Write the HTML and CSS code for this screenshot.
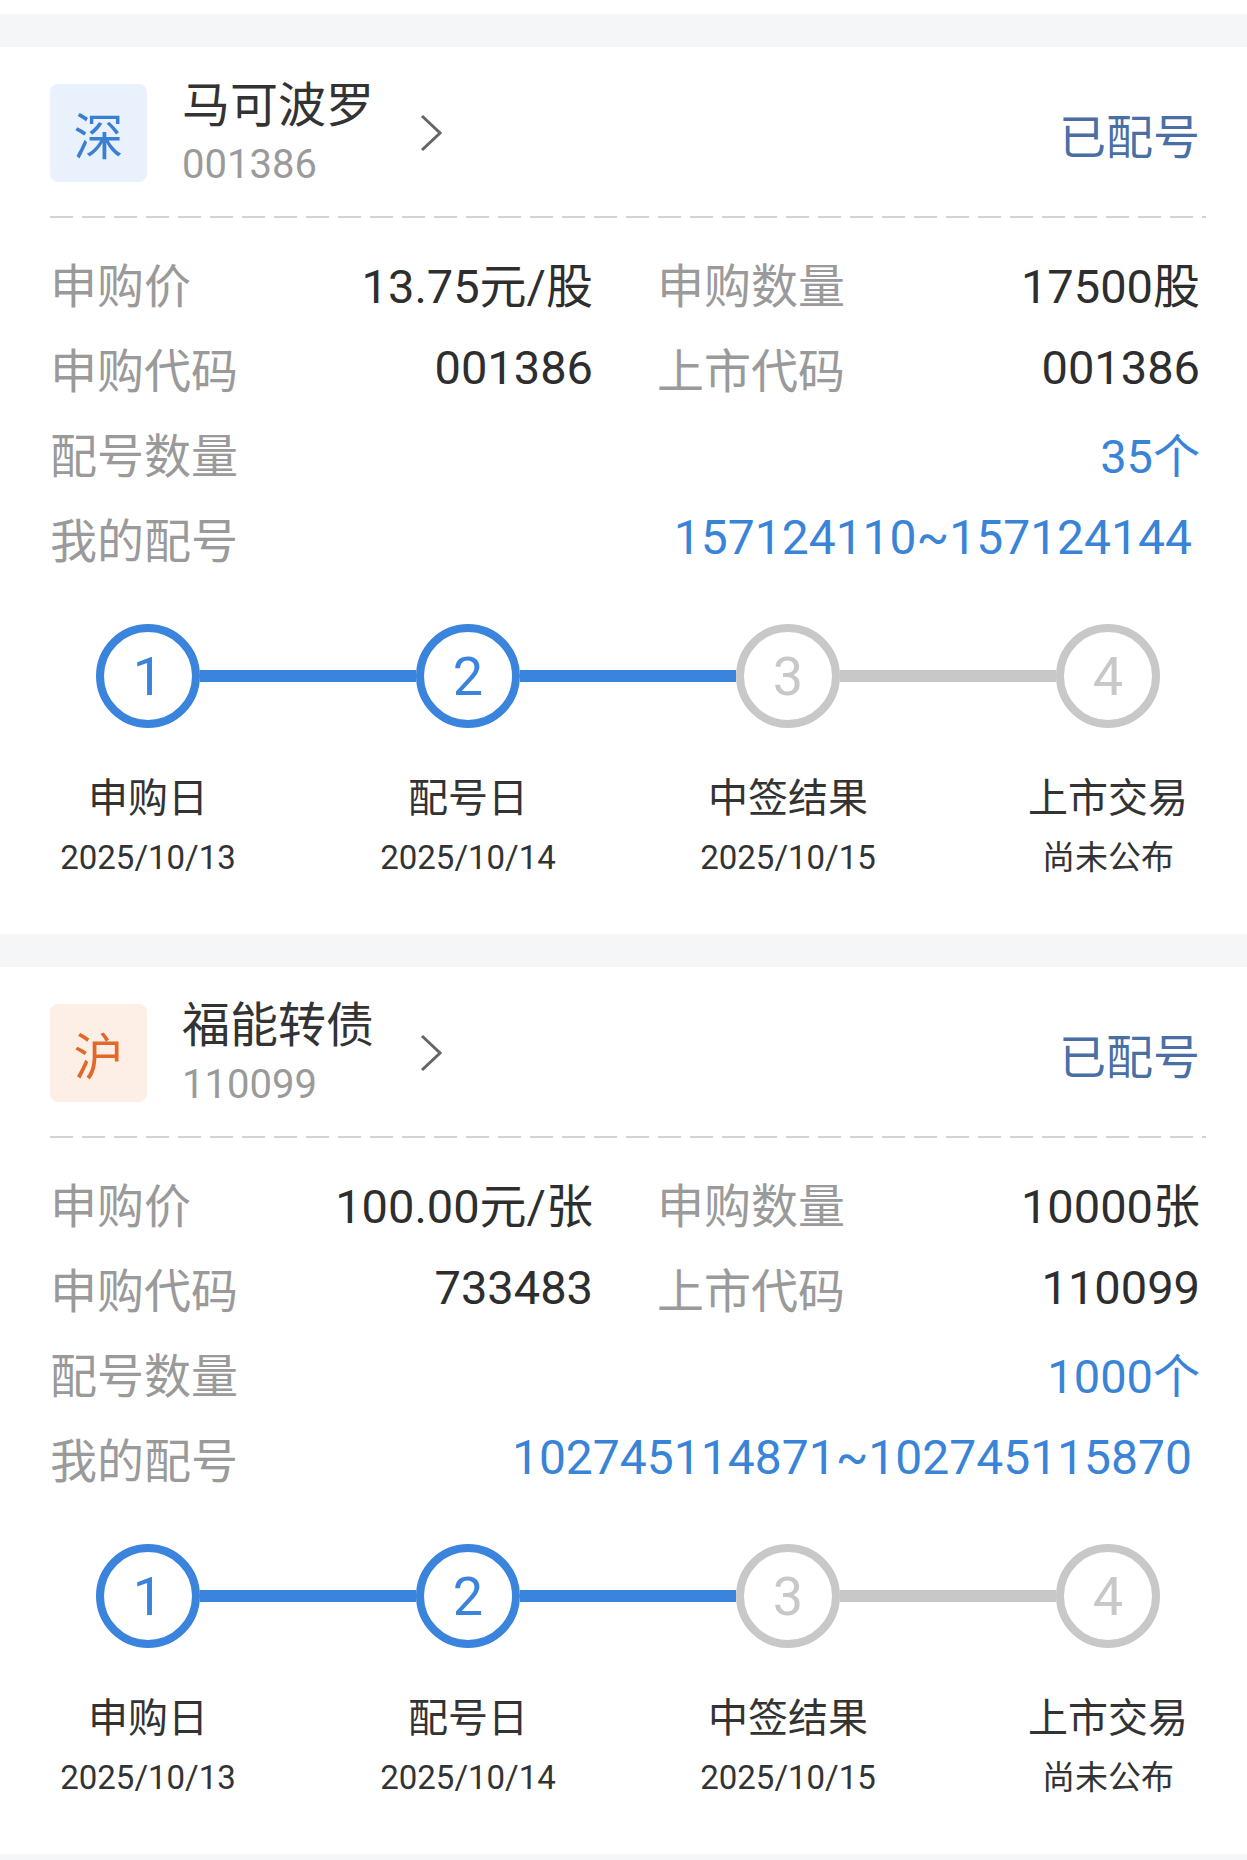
FILE: index.html
```html
<!DOCTYPE html>
<html lang="zh-CN">

<head>
    <meta charset="UTF-8">
    <meta name="viewport" content="width=device-width, initial-scale=1.0">
    <title>新股配号</title>
    <link rel="stylesheet" href="styles.css">
</head>

<body>
    <div class="top-strip"></div>

    <div class="list">
        <!-- 马可波罗 -->
        <div class="card">
            <div class="card-head">
                <div class="market market-sz">深</div>
                <div class="stock">
                    <div class="stock-name">马可波罗</div>
                    <div class="stock-code">001386</div>
                </div>
                <svg class="arrow" viewBox="0 0 22 38"><polyline points="2,2 20,19 2,36" /></svg>
                <div class="status">已配号</div>
            </div>
            <div class="dash"></div>

            <div class="info">
                <div class="info-grid">
                    <div class="pair"><span class="label">申购价</span><span class="value">13.75元/股</span></div>
                    <div class="pair"><span class="label">申购数量</span><span class="value">17500股</span></div>
                    <div class="pair"><span class="label">申购代码</span><span class="value">001386</span></div>
                    <div class="pair"><span class="label">上市代码</span><span class="value">001386</span></div>
                </div>
                <div class="pair"><span class="label">配号数量</span><span class="value blue">35个</span></div>
                <div class="pair"><span class="label">我的配号</span><span class="value blue range">157124110~157124144</span></div>
            </div>

            <div class="track">
                <div class="dot done">1</div>
                <div class="line done"></div>
                <div class="dot done">2</div>
                <div class="line done"></div>
                <div class="dot">3</div>
                <div class="line"></div>
                <div class="dot">4</div>
            </div>
            <div class="steps">
                <div class="step"><span class="step-name">申购日</span><span class="step-date">2025/10/13</span></div>
                <div class="step"><span class="step-name">配号日</span><span class="step-date">2025/10/14</span></div>
                <div class="step"><span class="step-name">中签结果</span><span class="step-date">2025/10/15</span></div>
                <div class="step"><span class="step-name">上市交易</span><span class="step-date">尚未公布</span></div>
            </div>
        </div>

        <!-- 福能转债 -->
        <div class="card">
            <div class="card-head">
                <div class="market market-sh">沪</div>
                <div class="stock">
                    <div class="stock-name">福能转债</div>
                    <div class="stock-code">110099</div>
                </div>
                <svg class="arrow" viewBox="0 0 22 38"><polyline points="2,2 20,19 2,36" /></svg>
                <div class="status">已配号</div>
            </div>
            <div class="dash"></div>

            <div class="info">
                <div class="info-grid">
                    <div class="pair"><span class="label">申购价</span><span class="value">100.00元/张</span></div>
                    <div class="pair"><span class="label">申购数量</span><span class="value">10000张</span></div>
                    <div class="pair"><span class="label">申购代码</span><span class="value">733483</span></div>
                    <div class="pair"><span class="label">上市代码</span><span class="value">110099</span></div>
                </div>
                <div class="pair"><span class="label">配号数量</span><span class="value blue">1000个</span></div>
                <div class="pair"><span class="label">我的配号</span><span class="value blue range">102745114871~102745115870</span></div>
            </div>

            <div class="track">
                <div class="dot done">1</div>
                <div class="line done"></div>
                <div class="dot done">2</div>
                <div class="line done"></div>
                <div class="dot">3</div>
                <div class="line"></div>
                <div class="dot">4</div>
            </div>
            <div class="steps">
                <div class="step"><span class="step-name">申购日</span><span class="step-date">2025/10/13</span></div>
                <div class="step"><span class="step-name">配号日</span><span class="step-date">2025/10/14</span></div>
                <div class="step"><span class="step-name">中签结果</span><span class="step-date">2025/10/15</span></div>
                <div class="step"><span class="step-name">上市交易</span><span class="step-date">尚未公布</span></div>
            </div>
        </div>
    </div>
</body>

</html>
```

FILE: styles.css
```css
body {
    font-family: Roboto, "Noto Sans CJK SC", sans-serif;
    background-color: #f5f6f8;
    margin: 0;
    padding: 0;
    color: #333;
}

.top-strip {
    height: 14px;
    background-color: #fff;
}

.list {
    padding-top: 33px;
}

.card {
    background-color: #fff;
    padding: 37px 47px 51px 50px;
}

.card + .card {
    margin-top: 33px;
}

/* 头部 */
.card-head {
    display: flex;
    align-items: center;
    height: 98px;
}

.market {
    width: 97px;
    height: 98px;
    border-radius: 8px;
    display: flex;
    align-items: center;
    justify-content: center;
    font-size: 50px;
}

.market-sz {
    background-color: #e8f1fc;
    color: #3a7fd2;
}

.market-sh {
    background-color: #fdefe6;
    color: #e0692a;
}

.stock {
    margin-left: 35px;
    padding-top: 6px;
}

.stock-name {
    font-size: 48px;
    line-height: 58px;
    color: #333;
}

.stock-code {
    font-size: 40px;
    line-height: 60px;
    color: #9a9a9a;
}

.arrow {
    width: 22px;
    height: 38px;
    margin-left: 46px;
    fill: none;
    stroke: #666;
    stroke-width: 3;
}

.status {
    margin-left: auto;
    font-size: 47px;
    color: #4a6fa5;
}

.dash {
    margin-top: 34px;
    margin-right: -6px;
    height: 2px;
    background: repeating-linear-gradient(to right, #d2d2d2 0 23px, transparent 23px 32px);
}

/* 信息 */
.info {
    margin-top: 22px;
}

.info-grid {
    display: grid;
    grid-template-columns: 1fr 1fr;
    column-gap: 64px;
}

.pair {
    display: flex;
    justify-content: space-between;
    align-items: center;
    height: 85px;
    font-size: 47px;
}

.label {
    color: #9a9a9a;
}

.value {
    color: #2e2e2e;
}

.value.blue {
    color: #3a84d8;
}

.value.range {
    font-size: 48px;
    padding-right: 8px;
}

/* 进度 */
.track {
    display: flex;
    align-items: center;
    margin: 44px 40px 0 46px;
}

.dot {
    width: 104px;
    height: 104px;
    box-sizing: border-box;
    border: 8px solid #c8c8c8;
    border-radius: 50%;
    display: flex;
    align-items: center;
    justify-content: center;
    font-size: 54px;
    color: #c8c8c8;
}

.dot.done {
    border-color: #3a84de;
    color: #3a84de;
}

.line {
    flex: 1;
    height: 12px;
    background-color: #c8c8c8;
}

.line.done {
    background-color: #3a84de;
}

.steps {
    display: flex;
    justify-content: space-between;
    margin: 46px 40px 0 46px;
}

.step {
    width: 104px;
    display: flex;
    flex-direction: column;
    align-items: center;
    white-space: nowrap;
}

.step-name {
    font-size: 40px;
    line-height: 50px;
    color: #333;
}

.step-date {
    font-size: 33px;
    line-height: 50px;
    margin-top: 9px;
    color: #333;
}
```
